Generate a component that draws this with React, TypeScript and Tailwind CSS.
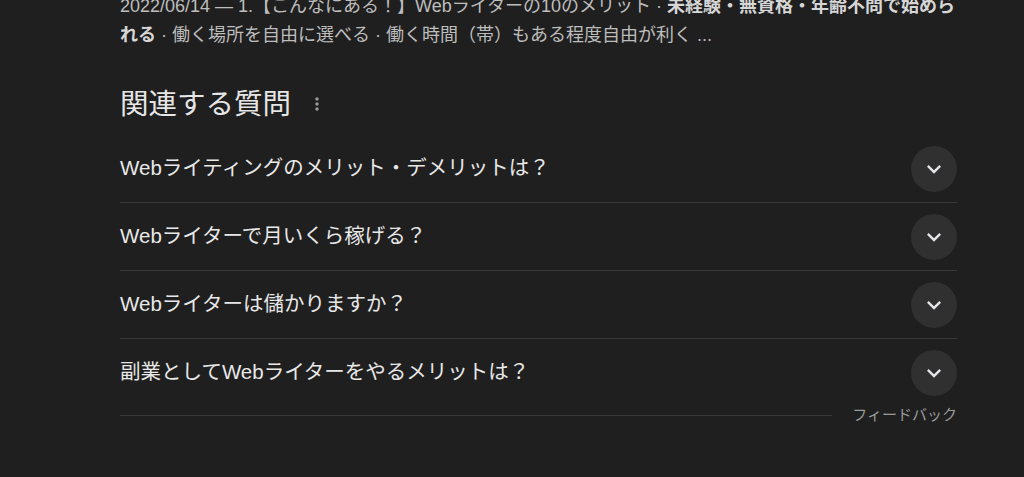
const FONT = 'font-["Liberation_Sans","Noto_Sans_CJK_JP",sans-serif]'

const questions = [
  'Webライティングのメリット・デメリットは？',
  'Webライターで月いくら稼げる？',
  'Webライターは儲かりますか？',
  '副業としてWebライターをやるメリットは？',
]

function Chevron() {
  return (
    <svg width="28" height="28" viewBox="0 0 24 24" fill="#e3e3e8">
      <path d="M16.59 8.59L12 13.17 7.41 8.59 6 10l6 6 6-6z" />
    </svg>
  )
}

export default function App() {
  return (
    <div className={`h-[477px] w-full overflow-hidden bg-[#1f1f1f] ${FONT}`}>
      <div className="ml-[120px] w-[837px]">
        {/* Snippet */}
        <div className="-mt-[8px] text-[18px] leading-[29px] text-[#bdbdbd]">
          <div className="whitespace-nowrap">
            2022/06/14 — 1.【こんなにある！】Webライターの10のメリット ·{' '}
            <b className="font-bold text-[#d6d6d6]">未経験・無資格・年齢不問で始めら</b>
          </div>
          <div className="whitespace-nowrap">
            <b className="font-bold text-[#d6d6d6]">れる</b> · 働く場所を自由に選べる · 働く時間（帯）もある程度自由が利く ...
          </div>
        </div>

        {/* Heading */}
        <div className="mt-[36px] flex h-[36px] items-center">
          <h2 className="text-[28.5px] leading-[36px] text-[#e6e6e6]">関連する質問</h2>
          <svg className="ml-[16px]" width="20" height="20" viewBox="0 0 24 24" fill="#9a9a9a">
            <path d="M12 8c1.1 0 2-.9 2-2s-.9-2-2-2-2 .9-2 2 .9 2 2 2zm0 2c-1.1 0-2 .9-2 2s.9 2 2 2 2-.9 2-2-.9-2-2-2zm0 6c-1.1 0-2 .9-2 2s.9 2 2 2 2-.9 2-2-.9-2-2-2z" />
          </svg>
        </div>

        {/* Questions */}
        <div className="mt-[13px]">
          {questions.map((q, i) => (
            <div
              key={q}
              className={`flex items-center justify-between ${
                i < questions.length - 1 ? 'h-[68px] border-b border-[#3a3a3a]' : 'h-[67px]'
              }`}
            >
              <span className="text-[20.5px] text-[#e8e8e8]">{q}</span>
              <div className="flex h-[46px] w-[46px] items-center justify-center rounded-full bg-[#303030]">
                <Chevron />
              </div>
            </div>
          ))}
        </div>

        {/* Feedback */}
        <div className="flex h-[18px] items-center gap-[20px]">
          <div className="h-px flex-1 bg-[#3a3a3a]" />
          <span className="text-[15px] leading-[18px] text-[#9a9a9a]">フィードバック</span>
        </div>
      </div>
    </div>
  )
}
